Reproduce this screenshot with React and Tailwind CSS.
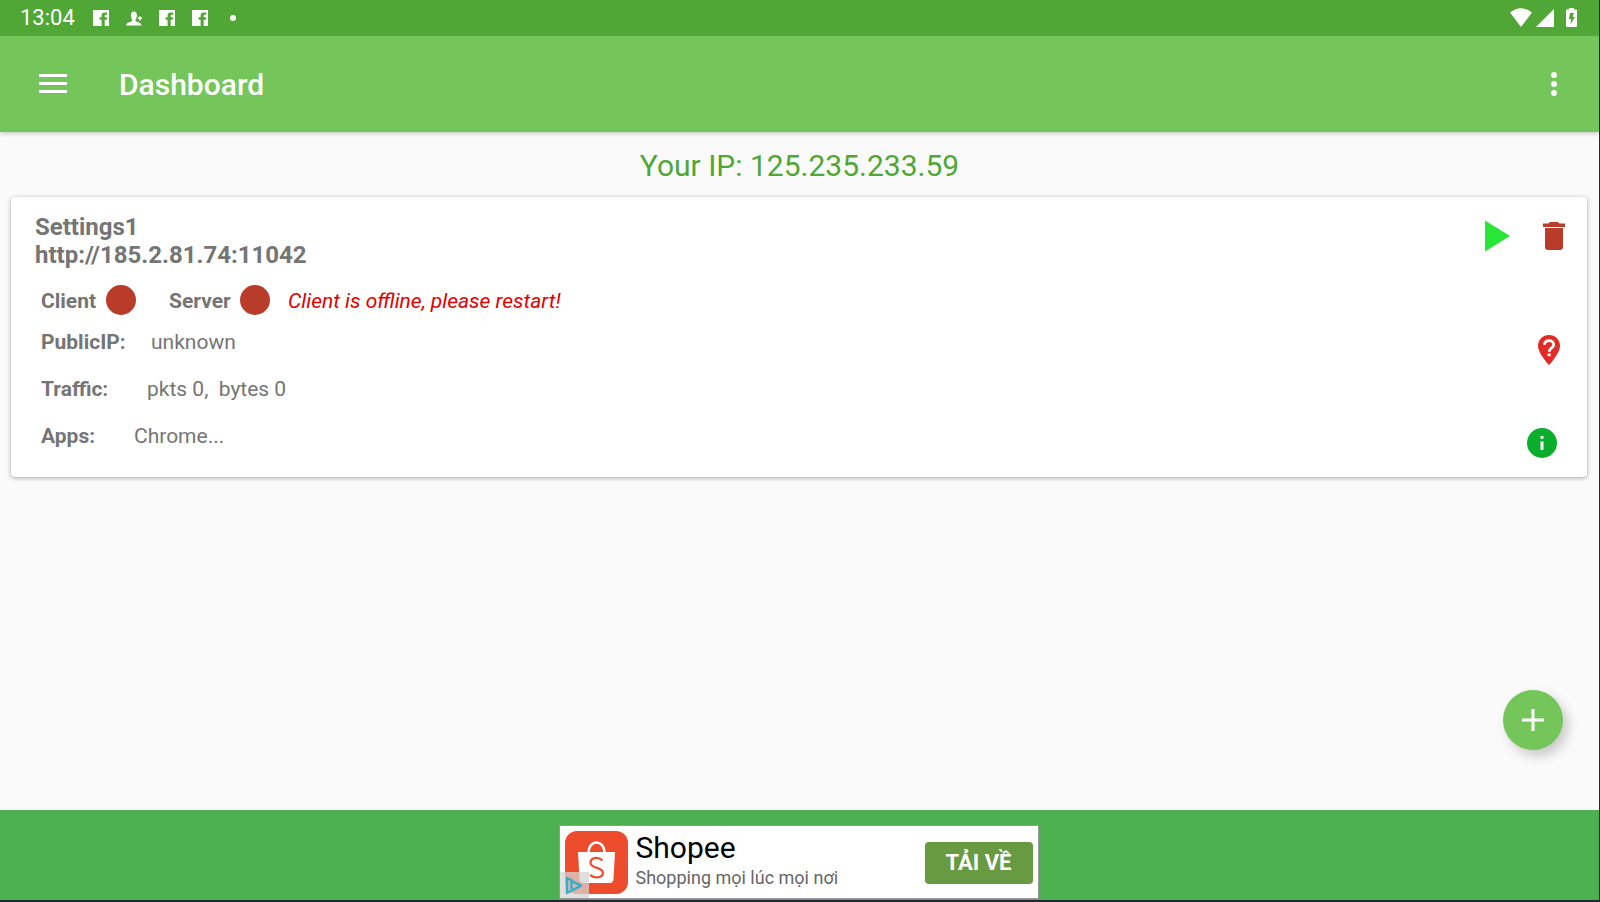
import React from "react";

function FacebookIcon() {
  return (
    <svg className="h-4 w-4" viewBox="0 0 16 16" aria-hidden="true">
      <path fill="currentColor" d="M0 0h16v16h-4.300V9.800h2.300V7.300h-2.300V5.700c0-.7.500-1 1.200-1h1.300V2.400h-2.400C9.700 2.400 8.600 3.600 8.600 5.400v1.900H6.600v2.500h2V16H0z" />
    </svg>
  );
}

function FriendIcon() {
  return (
    <svg className="h-4 w-4" viewBox="0 0 16 16" aria-hidden="true">
      <path fill="currentColor" d="M5 5.200C5 3 5.800 1.500 7.900 1.500s3 1.500 3 3.700c0 2.300-.7 3.300-1.300 4.300-.3 1 .1 1.900 1.200 2.200 2.400.8 4.400 1.400 4.700 3.800H0c.3-2.400 2.300-3 4.800-3.800 1.100-.3 1.600-1.200 1.300-2.200C5.500 8.500 5 7.500 5 5.200z" />
      <path fill="currentColor" d="M13.200 6.200h1.400v1.400H16V9h-1.400v1.400h-1.400V9h-1.400V7.600h1.400z" />
    </svg>
  );
}

function StatusBar() {
  return (
    <div className="z-20 flex h-9 items-center bg-[#50a735] pl-5 pr-[22px] text-white">
      <time className="w-[73px] text-[22px] leading-9">13:04</time>
      <div className="flex items-center gap-[17px]">
        <FacebookIcon />
        <FriendIcon />
        <FacebookIcon />
        <FacebookIcon />
      </div>
      <span className="ml-[22px] h-[6px] w-[6px] rounded-full bg-white" />
      <div className="ml-auto flex items-center gap-1">
        <svg className="h-5 w-[22px]" viewBox="0 0 22 20" aria-hidden="true">
          <path fill="#fff" d="M0 4.500Q11-4 22 4.500L11 19z" />
        </svg>
        <svg className="h-5 w-[18px]" viewBox="0 0 18 20" aria-hidden="true">
          <path fill="#fff" d="M18 1v18H0z" />
        </svg>
        <svg className="ml-2 h-5 w-[11px]" viewBox="0 0 11 20" aria-hidden="true">
          <path fill="#fff" d="M3 0h5v1.500h2q1 0 1 1V18q0 1-1 1H1q-1 0-1-1V2.500q0-1 1-1h2z" />
          <path fill="#50a735" d="M4 5h4L6.700 9H9l-4.600 7.500.8-5.500H3z" />
        </svg>
      </div>
    </div>
  );
}

function AppBar() {
  return (
    <header className="z-10 flex h-24 items-center bg-[#74c65a] pl-[39px] pr-[42px] text-white shadow-[0_1px_5px_rgba(0,0,0,0.25)]">
      <button type="button" aria-label="Open menu">
        <svg className="block h-5 w-7" viewBox="0 0 28 20" aria-hidden="true">
          <path fill="#fff" d="M0 0h28v3H0zM0 8h28v3H0zM0 16h28v3H0z" />
        </svg>
      </button>
      <h1 className="ml-[52px] pt-[2px] text-[30px] font-medium leading-9">Dashboard</h1>
      <button type="button" aria-label="More options" className="ml-auto">
        <svg className="block h-6 w-[6px]" viewBox="0 0 6 24" aria-hidden="true">
          <circle cx="3" cy="3" r="3" fill="#fff" />
          <circle cx="3" cy="12" r="3" fill="#fff" />
          <circle cx="3" cy="21" r="3" fill="#fff" />
        </svg>
      </button>
    </header>
  );
}

function Lamp() {
  return <span className="h-[30px] w-[30px] rounded-full bg-[#b93b29]" />;
}

function ProfileCard() {
  return (
    <section className="ml-[11px] mr-3 rounded bg-white pb-[17px] pl-6 pr-[22px] pt-4 text-[#757575] shadow-[0_1px_4px_rgba(0,0,0,0.35)]">
      <div className="flex items-start">
        <h2 className="text-2xl font-bold leading-7">
          Settings1
          <br />
          http://185.2.81.74:11042
        </h2>
        <div className="ml-auto flex items-center gap-[33px] pt-[7px]">
          <button type="button" aria-label="Start">
            <svg className="block h-8 w-[25px]" viewBox="0 0 25 32" aria-hidden="true">
              <path fill="#27e636" d="M0 .5 25 16 0 31.500z" />
            </svg>
          </button>
          <button type="button" aria-label="Delete">
            <svg className="block h-7 w-[22px]" viewBox="0 0 22 28" aria-hidden="true">
              <path fill="#b93b29" d="M7 0h8l1.500 1.500H22V5H0V1.500h5.500zM2 6h18v19q0 3-3 3H5q-3 0-3-3z" />
            </svg>
          </button>
        </div>
      </div>
      <div className="mt-4 flex h-[30px] items-center pl-[6px] text-[21px] leading-6">
        <span className="w-[65px] pt-[2px] font-bold">Client</span>
        <Lamp />
        <span className="ml-[33px] w-[71px] pt-[2px] font-bold">Server</span>
        <Lamp />
        <em className="ml-[18px] pt-[2px] text-[#e00000]">Client is offline, please restart!</em>
      </div>
      <div className="flex pl-[6px] text-[21px]">
        <dl className="pt-1">
          <div className="flex h-[47px] items-center">
            <dt className="w-[110px] font-bold">PublicIP:</dt>
            <dd>unknown</dd>
          </div>
          <div className="flex h-[47px] items-center">
            <dt className="w-[106px] font-bold">Traffic:</dt>
            <dd>pkts 0,&nbsp; bytes 0</dd>
          </div>
          <div className="flex h-[47px] items-center">
            <dt className="w-[93px] font-bold">Apps:</dt>
            <dd>Chrome...</dd>
          </div>
        </dl>
        <div className="ml-auto flex w-[38px] flex-col items-start justify-between pb-[2px] pt-5">
          <button type="button" aria-label="Unknown location" className="ml-[11px]">
            <svg className="block h-[30px] w-[22px]" viewBox="0 0 22 30" aria-hidden="true">
              <path fill="#e02b27" d="M11 0C4.900 0 0 4.700 0 10.700 0 18.500 11 30 11 30s11-11.500 11-19.300C22 4.700 17.100 0 11 0z" />
              <path fill="none" stroke="#fff" strokeWidth="2.800" d="M6.500 9.800c0-5.600 9.200-5.400 9.200 0 0 3.300-4.500 3-4.500 7" />
              <path fill="#fff" d="M9.700 18.500h3v2.700h-3z" />
            </svg>
          </button>
          <button type="button" aria-label="Details">
            <svg className="block h-[30px] w-[30px]" viewBox="0 0 30 30" aria-hidden="true">
              <circle cx="15" cy="15" r="15" fill="#0aad2c" />
              <path fill="#fff" d="M13.500 8h3v2.800h-3zM13.500 13.500h3V22h-3z" />
            </svg>
          </button>
        </div>
      </div>
    </section>
  );
}

function AdBanner() {
  return (
    <aside className="flex w-[480px] items-center border border-[#999] bg-white px-[5px] pb-1 pt-[5px]">
      <div className="relative">
        <svg className="block h-[63px] w-[63px]" viewBox="0 0 63 63" role="img" aria-label="Shopee">
          <rect width="63" height="63" rx="12" fill="#ee4d2d" />
          <path fill="#fff" d="M13 21h37l-1.500 27q-.3 4-4 4h-26q-3.700 0-4-4z" />
          <path fill="none" stroke="#fff" strokeWidth="2.400" d="M23.500 22c0-14 16-14 16 0" />
          <path fill="none" stroke="#ee4d2d" strokeWidth="2.200" d="M37.500 29.500c-5-4.500-12-2.500-12 2.200 0 6.300 12.500 4 12.500 9.800 0 5.500-8 6.500-13 2.300" />
        </svg>
        <svg className="absolute -bottom-1 -left-[5px] h-[26px] w-[29px]" viewBox="0 0 29 26" aria-hidden="true">
          <path fill="#d4d4d4" fillOpacity=".75" d="M0 0h29v26H0z" />
          <path fill="none" stroke="#35acc9" strokeWidth="2.400" strokeLinejoin="round" d="M11.500 17V9l9.500 4.700L7 21V6l6 3" />
        </svg>
      </div>
      <div className="ml-2 self-start">
        <p className="text-[30px] leading-[34px] text-black">Shopee</p>
        <p className="text-lg leading-[26px] text-[#666]">Shopping mọi lúc mọi nơi</p>
      </div>
      <button type="button" className="ml-auto h-[42px] w-[108px] rounded bg-[#689a41] text-[22px] font-bold text-white">
        TẢI VỀ
      </button>
    </aside>
  );
}

export default function App() {
  return (
    <div className="flex min-h-screen flex-col border-b-2 border-r border-[#1f2733] bg-[#fafafa] font-['Roboto','Liberation_Sans',sans-serif]">
      <StatusBar />
      <AppBar />
      <main className="flex flex-1 flex-col">
        <p className="pb-[13px] pt-4 text-center text-[30px] leading-9 text-[#50a735]">Your IP: 125.235.233.59</p>
        <ProfileCard />
        <button
          type="button"
          aria-label="Add profile"
          className="mb-[60px] mr-9 mt-auto flex h-[60px] w-[60px] items-center justify-center self-end rounded-full bg-[#74c65a] shadow-[5px_6px_12px_rgba(0,0,0,0.2)]"
        >
          <svg className="h-[22px] w-[22px]" viewBox="0 0 22 22" aria-hidden="true">
            <path fill="#fff" d="M9.500 0h3v9.500H22v3h-9.500V22h-3v-9.500H0v-3h9.500z" />
          </svg>
        </button>
      </main>
      <footer className="flex justify-center bg-[#4db050] pb-px pr-[2px] pt-[15px]">
        <AdBanner />
      </footer>
    </div>
  );
}
